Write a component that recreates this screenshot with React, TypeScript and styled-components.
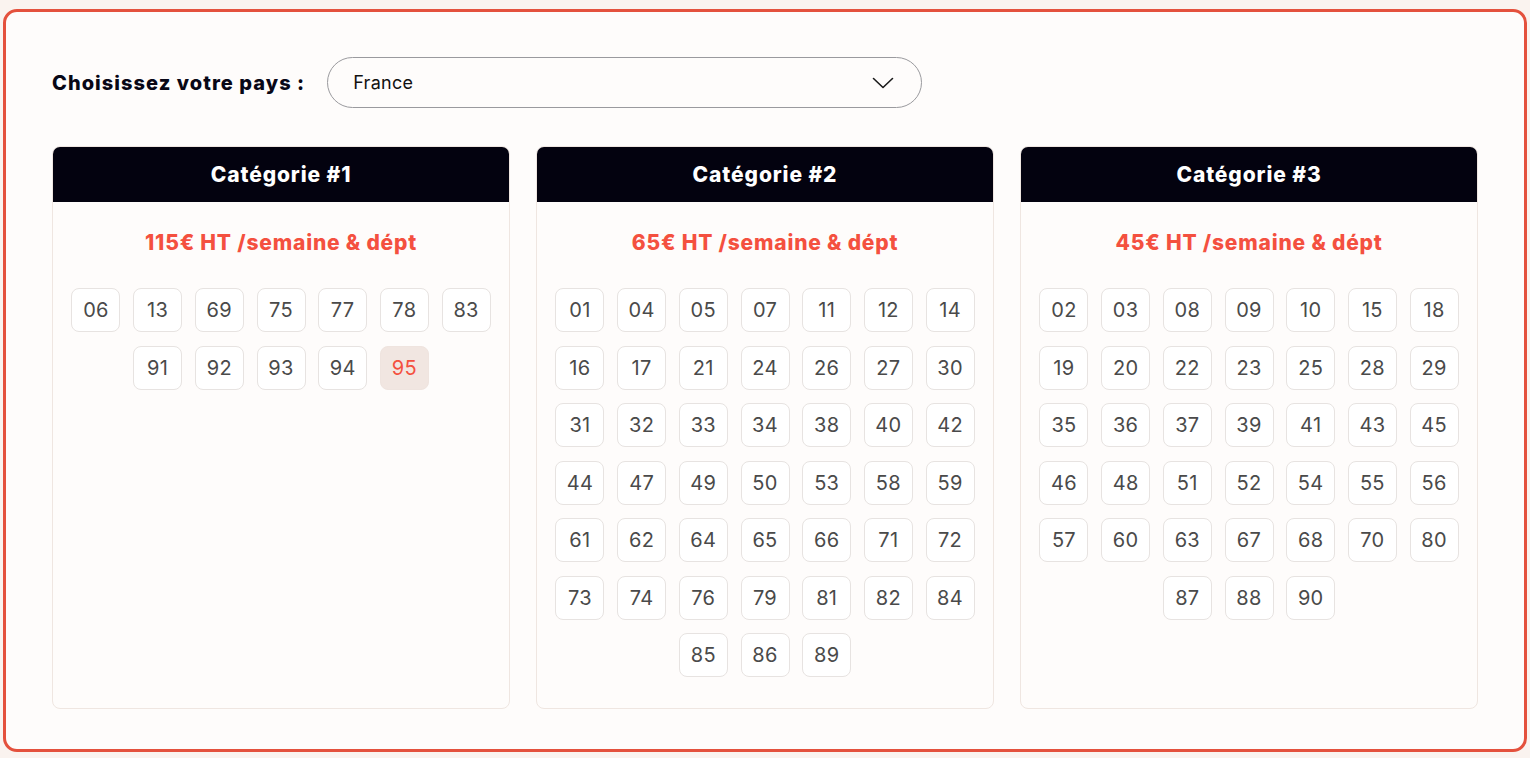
import React from "react";
import styled, { createGlobalStyle } from "styled-components";

const Global = createGlobalStyle`
  html, body { margin: 0; padding: 0; background: #faf3ef; }
  body { font-family: "Inter", "Noto Sans", sans-serif; }
  * { box-sizing: border-box; }
`;

const Page = styled.div`
  padding: 9px 3px 6px 3px;
`;

const Frame = styled.div`
  height: 743px;
  border: 3px solid #e4513d;
  border-radius: 14px;
  background: #fefcfb;
  padding: 45px 46px 40px 46px;
  display: flex;
  flex-direction: column;
  gap: 38px;
`;

const CountryRow = styled.div`
  display: flex;
  align-items: center;
  gap: 22px;
  height: 51px;
`;

const Label = styled.label`
  font-weight: 800;
  font-size: 20px;
  color: #080716;
  letter-spacing: 1.05px;
`;

const Select = styled.div`
  width: 595px;
  height: 51px;
  border: 1px solid #9a9a9e;
  border-radius: 26px;
  display: flex;
  align-items: center;
  justify-content: space-between;
  padding: 0 27px 0 25px;
  font-size: 18px;
  letter-spacing: 0.3px;
  color: #111;
  background: #fefcfb;
`;

const Cards = styled.div`
  flex: 1;
  display: grid;
  grid-template-columns: repeat(3, 1fr);
  gap: 26px;
`;

const Card = styled.div`
  border: 1px solid #efe6e1;
  border-radius: 8px;
  overflow: hidden;
  display: flex;
  flex-direction: column;
`;

const CardHeader = styled.div`
  height: 55px;
  background: #03020f;
  color: #fff;
  font-weight: 800;
  font-size: 21px;
  letter-spacing: 0.9px;
  display: flex;
  align-items: center;
  justify-content: center;
`;

const Price = styled.div`
  margin-top: 28px;
  text-align: center;
  color: #f4503f;
  font-weight: 800;
  font-size: 21px;
  letter-spacing: 0.8px;
`;

const Chips = styled.div`
  margin-top: 33px;
  padding: 0 18px;
  display: flex;
  flex-wrap: wrap;
  justify-content: center;
  column-gap: 12.7px;
  row-gap: 13.5px;
`;

const Chip = styled.div<{ $active?: boolean }>`
  width: 49px;
  height: 44px;
  border: 1px solid ${(p) => (p.$active ? "#efe4df" : "#e7e3e1")};
  border-radius: 8px;
  background: ${(p) => (p.$active ? "#f1e6e1" : "#ffffff")};
  color: ${(p) => (p.$active ? "#f4503f" : "#4a4a4a")};
  font-size: 20px;
  letter-spacing: 0.3px;
  display: flex;
  align-items: center;
  justify-content: center;
`;

const categories = [
  {
    title: "Catégorie #1",
    price: "115€ HT /semaine & dépt",
    depts: ["06", "13", "69", "75", "77", "78", "83", "91", "92", "93", "94", "95"],
    active: "95",
  },
  {
    title: "Catégorie #2",
    price: "65€ HT /semaine & dépt",
    depts: [
      "01", "04", "05", "07", "11", "12", "14", "16", "17", "21", "24", "26", "27", "30",
      "31", "32", "33", "34", "38", "40", "42", "44", "47", "49", "50", "53", "58", "59",
      "61", "62", "64", "65", "66", "71", "72", "73", "74", "76", "79", "81", "82", "84",
      "85", "86", "89",
    ],
  },
  {
    title: "Catégorie #3",
    price: "45€ HT /semaine & dépt",
    depts: [
      "02", "03", "08", "09", "10", "15", "18", "19", "20", "22", "23", "25", "28", "29",
      "35", "36", "37", "39", "41", "43", "45", "46", "48", "51", "52", "54", "55", "56",
      "57", "60", "63", "67", "68", "70", "80", "87", "88", "90",
    ],
  },
];

export default function App() {
  return (
    <Page>
      <Global />
      <Frame>
        <CountryRow>
          <Label>Choisissez votre pays :</Label>
          <Select>
            <span>France</span>
            <svg width="22" height="12" viewBox="0 0 22 12" fill="none">
              <path d="M1.5 1.5 L11 10.5 L20.5 1.5" stroke="#1a1a1a" strokeWidth="1.6" strokeLinecap="round" strokeLinejoin="round" />
            </svg>
          </Select>
        </CountryRow>
        <Cards>
          {categories.map((c) => (
            <Card key={c.title}>
              <CardHeader>{c.title}</CardHeader>
              <Price>{c.price}</Price>
              <Chips>
                {c.depts.map((d) => (
                  <Chip key={d} $active={d === c.active}>
                    {d}
                  </Chip>
                ))}
              </Chips>
            </Card>
          ))}
        </Cards>
      </Frame>
    </Page>
  );
}
